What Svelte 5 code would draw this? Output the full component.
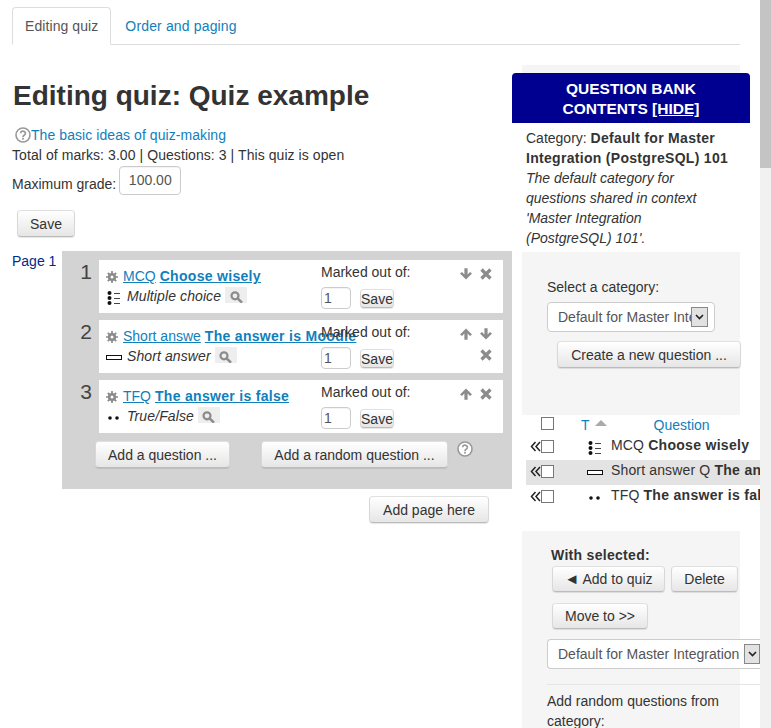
<script lang="ts">
	const slots = [
		{ n: 1, name: 'MCQ', title: 'Choose wisely', type: 'Multiple choice', icon: 'multi', up: false, down: true },
		{ n: 2, name: 'Short answe', title: 'The answer is Moodle', type: 'Short answer', icon: 'short', up: true, down: true },
		{ n: 3, name: 'TFQ', title: 'The answer is false', type: 'True/False', icon: 'tf', up: true, down: false }
	];
	const rows = [
		{ name: 'MCQ', title: 'Choose wisely', icon: 'multi', on: false },
		{ name: 'Short answer Q', title: 'The answer is Moodle', icon: 'short', on: true },
		{ name: 'TFQ', title: 'The answer is false', icon: 'tf', on: false }
	];
</script>

{#snippet qtype(kind: string)}
	<svg class="qtype" width="16" height="16" viewBox="0 0 16 16">
		{#if kind === 'multi'}
			<circle cx="3.5" cy="3" r="2" fill="#111" />
			<circle cx="3.5" cy="8" r="2" fill="#111" />
			<circle cx="3.5" cy="13" r="2" fill="#111" />
			<path d="M8 3.5h6M8 8.5h6M8 13.5h6" stroke="#444" fill="none" />
		{:else if kind === 'short'}
			<rect x="0.5" y="5.5" width="15" height="4" fill="#fff" stroke="#111" />
		{:else}
			<circle cx="4" cy="8" r="1.8" fill="#111" />
			<circle cx="11" cy="8" r="1.8" fill="#111" />
		{/if}
	</svg>
{/snippet}

{#snippet gear()}
	<svg class="gear" width="12" height="12" viewBox="0 0 12 12">
		<path d="M6 3.2a2.8 2.8 0 1 0 0 5.6a2.8 2.8 0 0 0 0-5.6z" fill="none" stroke="#8a8a8a" stroke-width="2.6" />
		<path d="M6 0v12M0 6h12M1.8 1.8l8.4 8.4M10.2 1.8l-8.4 8.4" stroke="#8a8a8a" stroke-width="1.7" />
		<circle cx="6" cy="6" r="1.5" fill="#fff" />
	</svg>
{/snippet}

{#snippet help(size: number)}
	<svg class="helpicon" width={size} height={size} viewBox="0 0 16 16">
		<circle cx="8" cy="8" r="7" fill="#fff" stroke="#999" stroke-width="1.6" />
		<path d="M5.6 6.2a2.4 2.2 0 1 1 3.6 2c-.8.5-1.2.8-1.2 1.7" fill="none" stroke="#999" stroke-width="1.7" />
		<rect x="7.1" y="10.8" width="1.8" height="1.8" fill="#999" />
	</svg>
{/snippet}

{#snippet arrow(up: boolean)}
	<svg width="12" height="12" viewBox="0 0 12 12">
		<path d={up ? 'M6 .5L12 6.5L10 8L7.6 5.6V11.8H4.4V5.6L2 8L0 6.5z' : 'M6 11.5L12 5.5L10 4L7.6 6.4V.2H4.4V6.4L2 4L0 5.5z'} fill="#8c8c8c" />
	</svg>
{/snippet}

{#snippet cross()}
	<svg width="12" height="12" viewBox="0 0 12 12">
		<path d="M1.5 1.5l9 9M10.5 1.5l-9 9" stroke="#8c8c8c" stroke-width="3.2" />
	</svg>
{/snippet}

{#snippet chevron()}
	<span class="selarrow">
		<svg width="9" height="6" viewBox="0 0 9 6"><path d="M1 1l3.5 3.5L8 1" fill="none" stroke="#222" stroke-width="1.6" /></svg>
	</span>
{/snippet}

<div class="page">
	<div class="content">
		<nav class="tabs">
			<span class="tab active">Editing quiz</span>
			<a class="tab" href="#order">Order and paging</a>
		</nav>

		<div class="columns">
			<main>
				<h1>Editing quiz: Quiz example</h1>
				<div class="docs">
					{@render help(16)}<a href="#docs">The basic ideas of quiz-making</a>
				</div>
				<div class="status">Total of marks: 3.00 | Questions: 3 | This quiz is open</div>
				<div class="grade">
					<span>Maximum grade:</span>
					<input value="100.00" />
				</div>
				<button class="btn save">Save</button>

				<section class="quizpage">
					<a class="pagelabel" href="#page">Page 1</a>
					<div class="panel">
						{#each slots as s}
							<div class="slotrow">
								<span class="num">{s.n}</span>
								<div class="slot">
									<div class="info">
										<div class="qname">
											{@render gear()}
											<a href="#q">{s.name}</a>
											<a href="#q" class="strong">{s.title}</a>
										</div>
										<div class="qkind">
											{@render qtype(s.icon)}
											<em>{s.type}</em>
											<span class="preview">
												<svg width="13" height="12" viewBox="0 0 13 12">
													<circle cx="5" cy="4.8" r="3.5" fill="none" stroke="#8c8c8c" stroke-width="2.2" />
													<path d="M7.6 7.4l4.4 4.2" stroke="#8c8c8c" stroke-width="2.6" />
												</svg>
											</span>
										</div>
									</div>
									<div class="marks">
										<div class="marklabel">Marked out of:</div>
										<div class="markform">
											<input value="1" />
											<button class="btn mini">Save</button>
										</div>
									</div>
									<div class="actions">
										{#if s.up}{@render arrow(true)}{/if}
										{#if s.down}{@render arrow(false)}{/if}
										{@render cross()}
									</div>
								</div>
							</div>
						{/each}
						<div class="addrow">
							<button class="btn add">Add a question ...</button>
							<button class="btn addrandom">Add a random question ...</button>
							<span class="addhelp">{@render help(16)}</span>
						</div>
					</div>
				</section>
				<div class="addpage"><button class="btn">Add page here</button></div>
			</main>

			<aside>
				<div class="bankcap"></div>
				<header class="bankhead">QUESTION BANK<br />CONTENTS <a href="#hide">[HIDE]</a></header>
				<div class="catinfo">
					Category: <strong>Default for Master Integration (PostgreSQL) 101</strong><br />
					<em>The default category for questions shared in context 'Master Integration (PostgreSQL) 101'.</em>
				</div>
				<div class="light choose">
					<label for="cat">Select a category:</label>
					<div class="selwrap short">
						<select id="cat"><option>Default for Master Integration (PostgreSQL) 101</option></select>
						{@render chevron()}
					</div>
					<button class="btn create">Create a new question ...</button>
				</div>
				<div class="qtable">
					<div class="qhead">
						<span class="check"></span>
						<a class="tcol" href="#t">T</a>
						<svg class="sort" width="12" height="6" viewBox="0 0 12 6"><path d="M6 0l6 6H0z" fill="#aaa" /></svg>
						<a class="qcol" href="#q">Question</a>
					</div>
					{#each rows as r}
						<div class="qrow" class:on={r.on}>
							<svg class="addicon" width="12" height="12" viewBox="0 0 12 12">
								<path d="M5.5 2L1.5 6.5L5.5 11M10 2L6 6.5L10 11" fill="none" stroke="#222" stroke-width="1.5" />
							</svg>
							<span class="check"></span>
							<span class="rowicon">{@render qtype(r.icon)}</span>
							<span class="rowtext">{r.name} <b>{r.title}</b></span>
						</div>
					{/each}
				</div>
				<div class="light selected">
					<div class="withsel">With selected:</div>
					<div class="selbtns">
						<button class="btn addquiz"><span class="tri">◄</span> Add to quiz</button>
						<button class="btn del">Delete</button>
					</div>
					<button class="btn move">Move to &gt;&gt;</button>
					<div class="selwrap wide">
						<select><option>Default for Master Integration (PostgreSQL) 101</option></select>
						{@render chevron()}
					</div>
					<hr />
					<p>Add random questions from category:</p>
				</div>
			</aside>
		</div>
	</div>
	<div class="scrollbar"><div class="thumb"></div></div>
</div>

<style>
	:global(body) {
		margin: 0;
		background: #fff;
	}
	.page {
		display: flex;
		width: 771px;
		height: 728px;
		overflow: hidden;
		font-family: 'Liberation Sans', Arial, sans-serif;
		font-size: 14px;
		line-height: 20px;
		color: #333;
	}
	.content {
		width: 760px;
		flex: none;
		overflow: hidden;
	}
	.scrollbar {
		flex: 1;
		background: #f1f1f1;
	}
	.thumb {
		height: 168px;
		background: #c4c4c4;
	}
	a {
		color: #1080bc;
		text-decoration: none;
	}
	strong,
	b {
		letter-spacing: 0.3px;
	}

	.tabs {
		display: flex;
		width: 728px;
		height: 45px;
		margin-left: 12px;
		padding-top: 7px;
		box-sizing: border-box;
		border-bottom: 1px solid #ddd;
	}
	.tab {
		height: 38px;
		box-sizing: border-box;
		padding: 9px 13px 0 14px;
		letter-spacing: 0.15px;
	}
	.tab.active {
		border: 1px solid #ddd;
		border-bottom: 1px solid #fff;
		border-radius: 4px 4px 0 0;
		padding: 8px 12px 0;
		color: #555;
		background: #fff;
		letter-spacing: 0.08px;
	}

	.columns {
		display: flex;
	}
	main {
		width: 512px;
		flex: none;
	}
	h1 {
		margin: 33px 0 0 13px;
		font-size: 28px;
		line-height: 36px;
		font-weight: bold;
		white-space: nowrap;
	}
	.docs {
		display: flex;
		align-items: center;
		margin: 11px 0 0 15px;
		letter-spacing: 0.07px;
	}
	.helpicon {
		flex: none;
	}
	.status {
		margin: 0 0 0 12px;
		letter-spacing: 0.07px;
	}
	.grade {
		display: flex;
		align-items: center;
		margin: 1px 0 0 12px;
		height: 29px;
	}
	.grade span {
		margin-top: 7px;
	}
	input {
		box-sizing: border-box;
		border: 1px solid #ccc;
		border-radius: 4px;
		font: inherit;
		color: #555;
		background: #fff;
		padding: 0 4px;
		outline: none;
		box-shadow: inset 0 1px 1px rgba(0, 0, 0, 0.05);
	}
	.grade input {
		width: 62px;
		height: 29px;
		margin-left: 3px;
		text-align: center;
		padding: 0 0 2px;
	}
	.btn {
		display: inline-block;
		box-sizing: border-box;
		height: 27px;
		padding: 0 12px;
		border: 1px solid #ccc;
		border-color: #e0e0e0 #d8d8d8 #bbb;
		border-radius: 4px;
		background: linear-gradient(#fff, #e6e6e6);
		font: inherit;
		color: #333;
		white-space: nowrap;
		box-shadow: 0 1px 1px rgba(0, 0, 0, 0.1);
	}
	.save {
		display: block;
		width: 58px;
		margin: 15px 0 0 17px;
	}
	.quizpage {
		display: flex;
		margin-top: 14px;
	}
	.pagelabel {
		width: 50px;
		margin: 0 0 0 12px;
		color: #00298a;
	}
	.panel {
		width: 450px;
		height: 238px;
		background: #d3d3d3;
		padding-top: 9px;
		box-sizing: border-box;
	}
	.slotrow {
		display: flex;
		margin-bottom: 7px;
	}
	.num {
		width: 37px;
		text-align: right;
		padding-right: 7px;
		box-sizing: border-box;
		font-size: 21px;
		line-height: 24px;
		color: #444;
	}
	.slot {
		display: flex;
		width: 404px;
		height: 53px;
		background: #fff;
	}
	.info {
		width: 222px;
		flex: none;
		padding: 6px 0 0 7px;
		box-sizing: border-box;
		white-space: nowrap;
	}
	.qname {
		display: flex;
		align-items: center;
		gap: 4px;
		height: 20px;
	}
	.qname a {
		flex: none;
		text-decoration: underline;
	}
	.gear {
		flex: none;
		margin-right: 1px;
		margin-top: 2px;
	}
	.strong {
		font-weight: bold;
		letter-spacing: 0.3px;
	}
	.qkind {
		display: flex;
		align-items: center;
		height: 20px;
	}
	.qkind .qtype {
		flex: none;
		margin: 3px 5px 0 0;
	}
	.qkind em {
		letter-spacing: 0.1px;
	}
	.preview {
		display: inline-flex;
		justify-content: center;
		flex: none;
		width: 22px;
		height: 16px;
		padding-top: 4px;
		box-sizing: border-box;
		margin: -2px 0 0 4px;
		background: #eee;
	}
	.marks {
		width: 130px;
		flex: none;
		padding-top: 2px;
	}
	.markform {
		display: flex;
		align-items: center;
		gap: 9px;
		margin-top: 5px;
	}
	.markform input {
		width: 30px;
		height: 22px;
		padding: 0 2px;
	}
	.btn.mini {
		height: 19px;
		padding: 0;
		width: 34px;
		margin-top: 1px;
		line-height: 16px;
	}
	.actions {
		display: flex;
		flex-wrap: wrap;
		justify-content: flex-end;
		align-content: flex-start;
		gap: 9px 8px;
		width: 40px;
		padding-top: 8px;
		margin-left: 1px;
	}
	.addrow {
		display: flex;
		align-items: flex-start;
		margin: 8px 0 0 33px;
	}
	.add {
		width: 135px;
	}
	.addrandom {
		width: 187px;
		margin-left: 31px;
	}
	.addhelp {
		margin: 0 0 0 9px;
	}
	.addpage {
		display: flex;
		justify-content: flex-end;
		margin: 7px 23px 0 0;
	}
	.addpage .btn {
		width: 120px;
		padding: 0;
	}

	aside {
		width: 248px;
		flex: none;
		margin-top: 20px;
	}
	.bankcap {
		height: 8px;
		margin: 0 20px 0 10px;
		background: #f5f5f5;
	}
	.bankhead {
		width: 238px;
		height: 50px;
		padding-top: 6px;
		box-sizing: border-box;
		border-radius: 4px 4px 0 0;
		background: #000090;
		color: #fff;
		font-weight: bold;
		text-align: center;
		font-size: 15.5px;
	}
	.bankhead a {
		color: #fff;
		text-decoration: underline;
	}
	.catinfo {
		height: 129px;
		width: 217px;
		padding: 5px 0 0 14px;
		box-sizing: border-box;
	}
	.light {
		margin: 0 20px 0 10px;
		background: #f5f5f5;
	}
	.choose {
		height: 163px;
		padding: 25px 0 0 25px;
		box-sizing: border-box;
	}
	.choose label {
		display: block;
	}
	.selwrap {
		position: relative;
		height: 30px;
		margin-top: 5px;
		box-sizing: border-box;
	}
	.selwrap.short {
		width: 168px;
	}
	.selwrap.wide {
		width: 213px;
		margin-top: 10px;
	}
	select {
		appearance: none;
		width: 100%;
		height: 100%;
		box-sizing: border-box;
		border: 1px solid #ccc;
		border-radius: 4px;
		background: #fff;
		font: inherit;
		color: #555;
		padding: 0 6px 0 10px;
		outline: none;
	}
	.selwrap.wide select {
		border-right: none;
		border-radius: 4px 0 0 4px;
		padding-right: 16px;
	}
	.selarrow {
		position: absolute;
		top: 5px;
		right: 7px;
		display: flex;
		align-items: center;
		justify-content: center;
		width: 17px;
		height: 20px;
		box-sizing: border-box;
		border: 1px solid #888;
		background: #e2e2e2;
	}
	.selwrap.wide .selarrow {
		right: 0;
		width: 16px;
	}
	.create {
		display: block;
		width: 184px;
		margin: 9px 0 0 10px;
		padding: 0;
	}
	.qtable {
		height: 116px;
		margin-left: 14px;
		overflow: hidden;
		background: #fff;
		white-space: nowrap;
	}
	.check {
		display: inline-block;
		flex: none;
		width: 13px;
		height: 13px;
		box-sizing: border-box;
		border: 1px solid #777;
		background: #fff;
	}
	.qhead {
		display: flex;
		align-items: center;
		height: 20px;
		padding-left: 15px;
	}
	.qhead .check {
		margin-top: -3px;
	}
	.tcol {
		margin: 0 0 0 27px;
	}
	.sort {
		margin: -5px 0 0 5px;
	}
	.qcol {
		margin-left: 47px;
	}
	.qrow {
		display: flex;
		align-items: center;
		height: 25px;
		padding-left: 4px;
	}
	.qrow.on {
		background: #e3e3e3;
	}
	.addicon {
		flex: none;
		margin-top: -3px;
	}
	.qrow .check {
		margin: -3px 0 0 -1px;
	}
	.rowicon {
		display: flex;
		flex: none;
		width: 24px;
		margin-left: 33px;
	}
	.qrow .rowtext {
		flex: none;
		margin-top: -6px;
		letter-spacing: 0.15px;
	}
	.selected {
		height: 200px;
		padding: 14px 0 0 25px;
		box-sizing: border-box;
	}
	.withsel {
		font-weight: bold;
		letter-spacing: 0.3px;
		margin-left: 4px;
	}
	.selbtns {
		display: flex;
		gap: 6px;
		margin: 1px 0 0 5px;
	}
	.selected .btn {
		height: 26px;
		padding: 0;
	}
	.addquiz {
		width: 113px;
	}
	.del {
		width: 67px;
	}
	.tri {
		font-size: 15px;
		line-height: 1;
	}
	.selected .move {
		display: block;
		width: 96px;
		margin: 11px 0 0 5px;
	}
	hr {
		width: 213px;
		margin: 15px 0 0;
		border: none;
		border-top: 1px solid #e5e5e5;
	}
	p {
		margin: 6px 0 0;
		width: 190px;
	}
</style>
